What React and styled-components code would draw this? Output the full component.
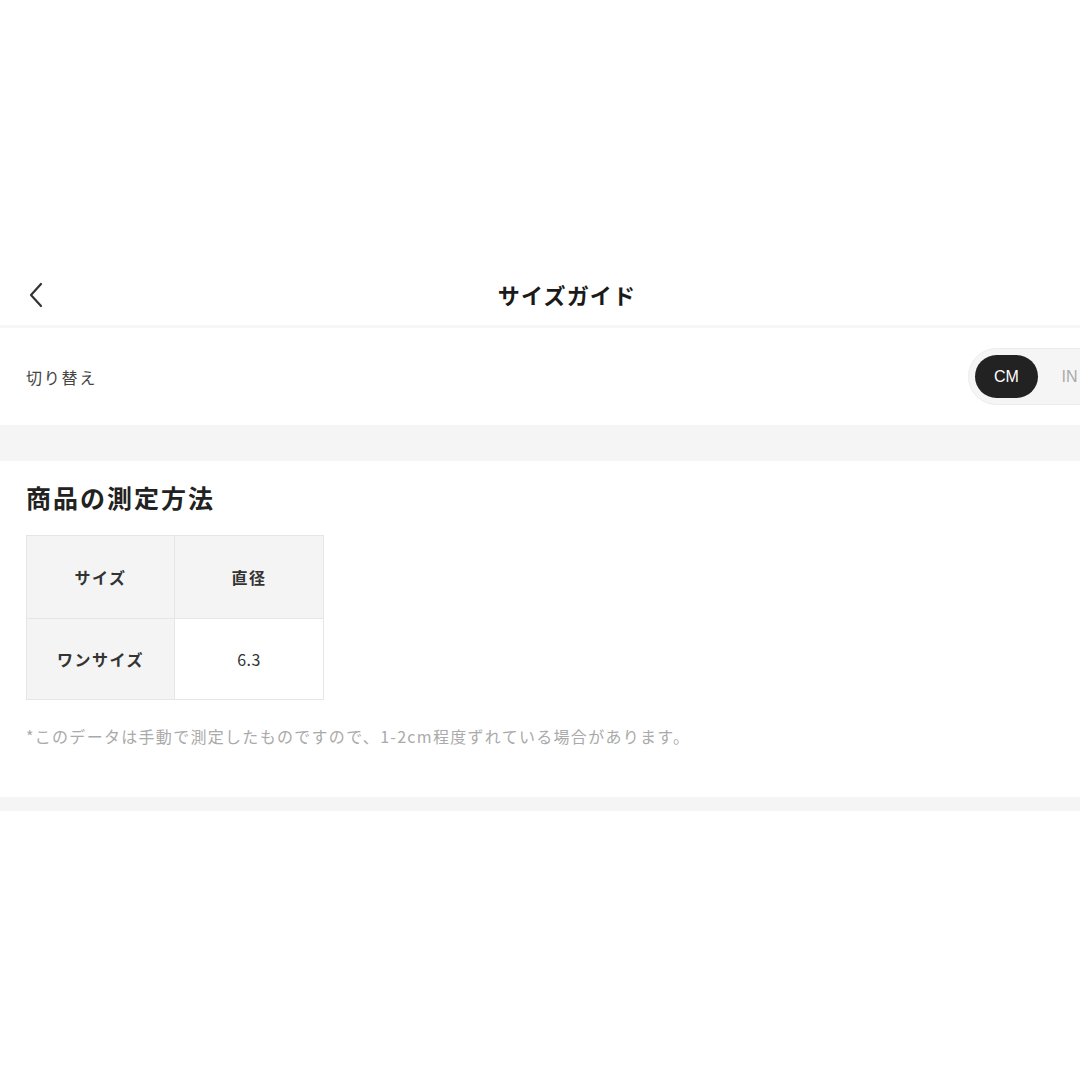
import React, { useState } from 'react';
import styled, { createGlobalStyle } from 'styled-components';

const GlobalStyle = createGlobalStyle`
  html, body {
    margin: 0;
    padding: 0;
    background: #fff;
    overflow: hidden;
  }
  body {
    font-family: "Noto Sans CJK JP", "Noto Sans", "Liberation Sans", sans-serif;
    color: #222;
  }
`;

const Page = styled.div`
  width: 1134px;
  padding-top: 264px;
`;

const Header = styled.header`
  height: 61px;
  display: flex;
  align-items: center;
  justify-content: center;
  position: relative;
  border-bottom: 3px solid #f7f7f7;
`;

const BackButton = styled.button`
  position: absolute;
  left: 22px;
  top: 17px;
  width: 28px;
  height: 28px;
  padding: 0;
  border: none;
  background: none;
  display: flex;
  align-items: center;
  justify-content: center;
`;

const Title = styled.h1`
  margin: 0;
  font-size: 22px;
  font-weight: 700;
  letter-spacing: 1.2px;
  color: #1a1a1a;
  transform: translateY(-1px);
`;

const SwitchRow = styled.div`
  height: 97px;
  display: flex;
  align-items: center;
  justify-content: space-between;
  padding: 0 26px;
`;

const Label = styled.span`
  font-size: 16px;
  letter-spacing: 1.8px;
  color: #444;
`;

const Toggle = styled.div`
  display: flex;
  padding: 6px;
  border-radius: 30px;
  background: #f5f5f5;
  border: 1px solid #ececec;
`;

const ToggleButton = styled.button`
  width: 63px;
  height: 43px;
  border: none;
  border-radius: 22px;
  font-family: "Liberation Sans", "Noto Sans", sans-serif;
  font-size: 16px;
  background: ${p => (p.$active ? '#222' : 'transparent')};
  color: ${p => (p.$active ? '#fff' : '#aaa')};
`;

const Band = styled.div`
  height: ${p => p.$h}px;
  background: #f5f5f5;
`;

const Section = styled.section`
  padding: 20px 26px 0;
  height: 336px;
  box-sizing: border-box;
`;

const SectionTitle = styled.h2`
  margin: 0 0 22px;
  font-size: 25px;
  font-weight: 700;
  letter-spacing: 2px;
  color: #222;
  line-height: 32px;
`;

const Table = styled.div`
  display: grid;
  grid-template-columns: 148px 148px;
  width: max-content;
  border: 1px solid #e6e6e6;
`;

const Cell = styled.div`
  height: ${p => p.$h}px;
  display: flex;
  align-items: center;
  justify-content: center;
  font-size: 16px;
  letter-spacing: ${p => (p.$bold ? '1.5px' : '0.5px')};
  font-weight: ${p => (p.$bold ? 700 : 400)};
  color: #333;
  background: ${p => (p.$gray ? '#f4f4f4' : '#fff')};
  border-right: ${p => (p.$last ? 'none' : '1px solid #e6e6e6')};
  border-bottom: ${p => (p.$bottom ? 'none' : '1px solid #e6e6e6')};
`;

const Note = styled.p`
  margin: 24px 0 0;
  font-size: 16px;
  letter-spacing: 1.3px;
  color: #aaa;
`;

export default function App() {
  const [unit, setUnit] = useState('CM');
  return (
    <>
      <GlobalStyle />
      <Page>
        <Header>
          <BackButton aria-label="戻る">
            <svg width="20" height="26" viewBox="0 0 20 26" fill="none">
              <path d="M15 2 L5 13 L15 24" stroke="#333" strokeWidth="2.2" strokeLinecap="round" strokeLinejoin="round" />
            </svg>
          </BackButton>
          <Title>サイズガイド</Title>
        </Header>
        <SwitchRow>
          <Label>切り替え</Label>
          <Toggle>
            {['CM', 'IN'].map(u => (
              <ToggleButton key={u} $active={unit === u} onClick={() => setUnit(u)}>{u}</ToggleButton>
            ))}
          </Toggle>
        </SwitchRow>
        <Band $h={36} />
        <Section>
          <SectionTitle>商品の測定方法</SectionTitle>
          <Table>
            <Cell $h={82} $gray $bold>サイズ</Cell>
            <Cell $h={82} $gray $bold $last>直径</Cell>
            <Cell $h={80} $gray $bold $bottom>ワンサイズ</Cell>
            <Cell $h={80} $last $bottom>6.3</Cell>
          </Table>
          <Note>*このデータは手動で測定したものですので、1-2cm程度ずれている場合があります。</Note>
        </Section>
        <Band $h={14} />
      </Page>
    </>
  );
}
